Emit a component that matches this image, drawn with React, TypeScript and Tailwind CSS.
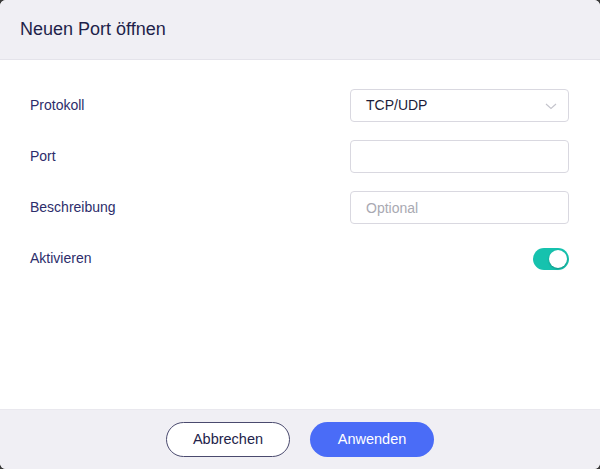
const Row = ({ label, children }: { label: string; children: React.ReactNode }) => (
  <div className="flex h-[33px] items-center justify-between">
    <span className="text-[14px] text-[#2d2d6b]">{label}</span>
    {children}
  </div>
);

export default function App() {
  return (
    <div className="h-[469px] w-[600px] bg-[#3a3a3a]" style={{ fontFamily: '"Liberation Sans", Arial, sans-serif' }}>
      <div className="flex h-full flex-col overflow-hidden rounded-[6px] bg-white">
        <div className="flex h-[60px] shrink-0 items-center border-b border-[#e4e3ea] bg-[#f0eff4] px-5">
          <h1 className="text-[18px] text-[#1f1f4a]">Neuen Port öffnen</h1>
        </div>

        <div className="flex flex-1 flex-col gap-[18px] pl-[30px] pr-[31px] pt-[29px]">
          <Row label="Protokoll">
            <div className="flex h-[33px] w-[219px] items-center justify-between rounded-[4px] border border-[#d9d8e0] pl-[15px] pr-[10px]">
              <span className="text-[14px] text-[#1c1c3a]">TCP/UDP</span>
              <svg width="14" height="14" viewBox="0 0 14 14" fill="none" stroke="#c4c4cc" strokeWidth="1.1">
                <path d="M2 5 L7 9.5 L12 5" />
              </svg>
            </div>
          </Row>
          <Row label="Port">
            <input className="h-[33px] w-[219px] rounded-[4px] border border-[#d9d8e0] px-[15px] text-[14px] outline-none" />
          </Row>
          <Row label="Beschreibung">
            <input
              placeholder="Optional"
              className="h-[33px] w-[219px] rounded-[4px] border border-[#d9d8e0] px-[15px] text-[14px] outline-none placeholder:text-[#a9a9b2]"
            />
          </Row>
          <Row label="Aktivieren">
            <div className="flex h-[22px] w-[36px] items-center justify-end rounded-full bg-[#16c2ae] pr-[2px]">
              <div className="h-[18px] w-[18px] rounded-full bg-white shadow-[0_1px_2px_rgba(0,0,0,0.25)]" />
            </div>
          </Row>
        </div>

        <div className="flex h-[60px] shrink-0 items-center justify-center gap-[20px] border-t border-[#e9e8ee] bg-[#f0eff4]">
          <button className="h-[35px] w-[124px] rounded-full border border-[#4a4a6e] bg-white text-[14.5px] text-[#23234a]">
            Abbrechen
          </button>
          <button className="h-[35px] w-[124px] rounded-full bg-[#4a6cf7] text-[14.5px] text-white">Anwenden</button>
        </div>
      </div>
    </div>
  );
}
